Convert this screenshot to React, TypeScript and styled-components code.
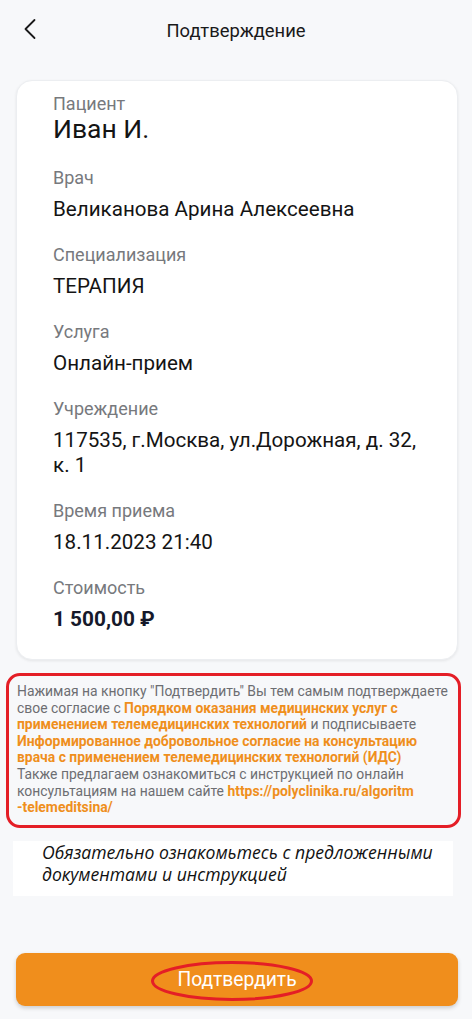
import React from "react";
import styled, { createGlobalStyle } from "styled-components";

const Global = createGlobalStyle`
  html, body { margin: 0; padding: 0; background: #f7f8fa; }
  body { font-family: Roboto, "Noto Sans", sans-serif; -webkit-font-smoothing: antialiased; }
  * { box-sizing: border-box; }
`;

const Page = styled.div`
  min-height: 1019px;
  display: flex;
  flex-direction: column;
  background: #f7f8fa;
`;

const Header = styled.header`
  position: relative;
  height: 60px;
  display: flex;
  align-items: center;
  justify-content: center;
`;

const BackButton = styled.button`
  position: absolute;
  left: 18px;
  top: 16px;
  width: 24px;
  height: 26px;
  padding: 0;
  border: none;
  background: transparent;
  display: flex;
  align-items: center;
  justify-content: center;
`;

const Title = styled.h1`
  margin: 0;
  font-size: 18.4px;
  font-weight: 400;
  color: #1a1a1a;
`;

const Card = styled.section`
  margin: 20px 14px 0 16px;
  background: #fff;
  border-radius: 16px;
  border: 1px solid #eceef1;
  box-shadow: 0 1px 3px rgba(0, 0, 0, 0.08);
  padding: 13px 20px 27px 36px;
  display: flex;
  flex-direction: column;
  gap: 21px;
`;

const Field = styled.div<{ $first?: boolean }>`
  display: flex;
  flex-direction: column;
  margin-bottom: ${(p) => (p.$first ? "5px" : "0")};
`;

const Label = styled.div<{ $compact?: boolean }>`
  font-size: 18px;
  line-height: ${(p) => (p.$compact ? "20px" : "24px")};
  color: #77797d;
`;

const Value = styled.div<{ $big?: boolean; $bold?: boolean }>`
  margin-top: ${(p) => (p.$big ? "3px" : "7px")};
  font-size: ${(p) => (p.$big ? "26.5px" : p.$bold ? "20.8px" : "20.6px")};
  line-height: ${(p) => (p.$big ? "23px" : "25px")};
  font-weight: ${(p) => (p.$bold ? 700 : 400)};
  color: ${(p) => (p.$bold ? "#16192b" : "#141414")};
`;

const Consent = styled.div`
  margin: 13px 11px 0 6px;
  border: 3px solid #e41e26;
  border-radius: 14px;
  padding: 7px 4px 9px 8px;
  font-size: 13.9px;
  line-height: 16.6px;
  color: #6d6e72;
  white-space: nowrap;
`;

const Link = styled.span`
  color: #ef8f1d;
  font-weight: 700;
`;

const Note = styled.div`
  margin: 13px 19px 0 13px;
  background: #fff;
  padding: 0 10px 11px 29px;
  font-family: "Open Sans", "Noto Sans", sans-serif;
  font-style: italic;
  font-size: 17.6px;
  line-height: 22px;
  color: #111;
`;

const Footer = styled.div`
  margin-top: auto;
  padding: 0 14px 13px 16px;
`;

const ConfirmButton = styled.button`
  width: 100%;
  height: 53px;
  border: none;
  border-radius: 9px;
  background: #f08e1c;
  box-shadow: 0 2px 4px rgba(0, 0, 0, 0.18);
  color: #fff;
  font-family: Roboto, sans-serif;
  font-size: 19.3px;
  display: flex;
  align-items: center;
  justify-content: center;
`;

const ButtonLabel = styled.span`
  position: relative;
  line-height: 24px;
`;

const Ellipse = styled.svg`
  position: absolute;
  left: 50%;
  top: 50%;
  width: 162px;
  height: 40px;
  margin-left: -86px;
  margin-top: -19px;
  overflow: visible;
  pointer-events: none;
`;

const fields: { label: string; value: React.ReactNode; bold?: boolean }[] = [
  { label: "Врач", value: "Великанова Арина Алексеевна" },
  { label: "Специализация", value: "ТЕРАПИЯ" },
  { label: "Услуга", value: "Онлайн-прием" },
  { label: "Учреждение", value: <>117535, г.Москва, ул.Дорожная, д. 32,<br />к. 1</> },
  { label: "Время приема", value: "18.11.2023 21:40" },
  { label: "Стоимость", value: "1 500,00 ₽", bold: true },
];

export default function App() {
  return (
    <Page>
      <Global />
      <Header>
        <BackButton aria-label="Назад">
          <svg width="14" height="22" viewBox="0 0 14 22" fill="none">
            <path d="M11.5 2 L2.5 11 L11.5 20" stroke="#1a1a1a" strokeWidth="1.8" strokeLinecap="round" strokeLinejoin="round" />
          </svg>
        </BackButton>
        <Title>Подтверждение</Title>
      </Header>
      <Card>
        <Field $first>
          <Label $compact>Пациент</Label>
          <Value $big>Иван И.</Value>
        </Field>
        {fields.map((f) => (
          <Field key={f.label}>
            <Label>{f.label}</Label>
            <Value $bold={f.bold}>{f.value}</Value>
          </Field>
        ))}
      </Card>
      <Consent>
        Нажимая на кнопку "Подтвердить" Вы тем самым подтверждаете
        <br />
        свое согласие с <Link>Порядком оказания медицинских услуг с</Link>
        <br />
        <Link>применением телемедицинских технологий</Link> и подписываете
        <br />
        <Link>Информированное добровольное согласие на консультацию</Link>
        <br />
        <Link>врача с применением телемедицинских технологий (ИДС)</Link>
        <br />
        Также предлагаем ознакомиться с инструкцией по онлайн
        <br />
        консультациям на нашем сайте <Link>https://polyclinika.ru/algoritm</Link>
        <br />
        <Link>-telemeditsina/</Link>
      </Consent>
      <Note>Обязательно ознакомьтесь с предложенными документами и инструкцией</Note>
      <Footer>
        <ConfirmButton>
          <ButtonLabel>
            Подтвердить
            <Ellipse viewBox="0 0 162 40">
              <ellipse cx="81" cy="20" rx="79.5" ry="18.5" stroke="#e41e26" strokeWidth="3" fill="none" />
            </Ellipse>
          </ButtonLabel>
        </ConfirmButton>
      </Footer>
    </Page>
  );
}
